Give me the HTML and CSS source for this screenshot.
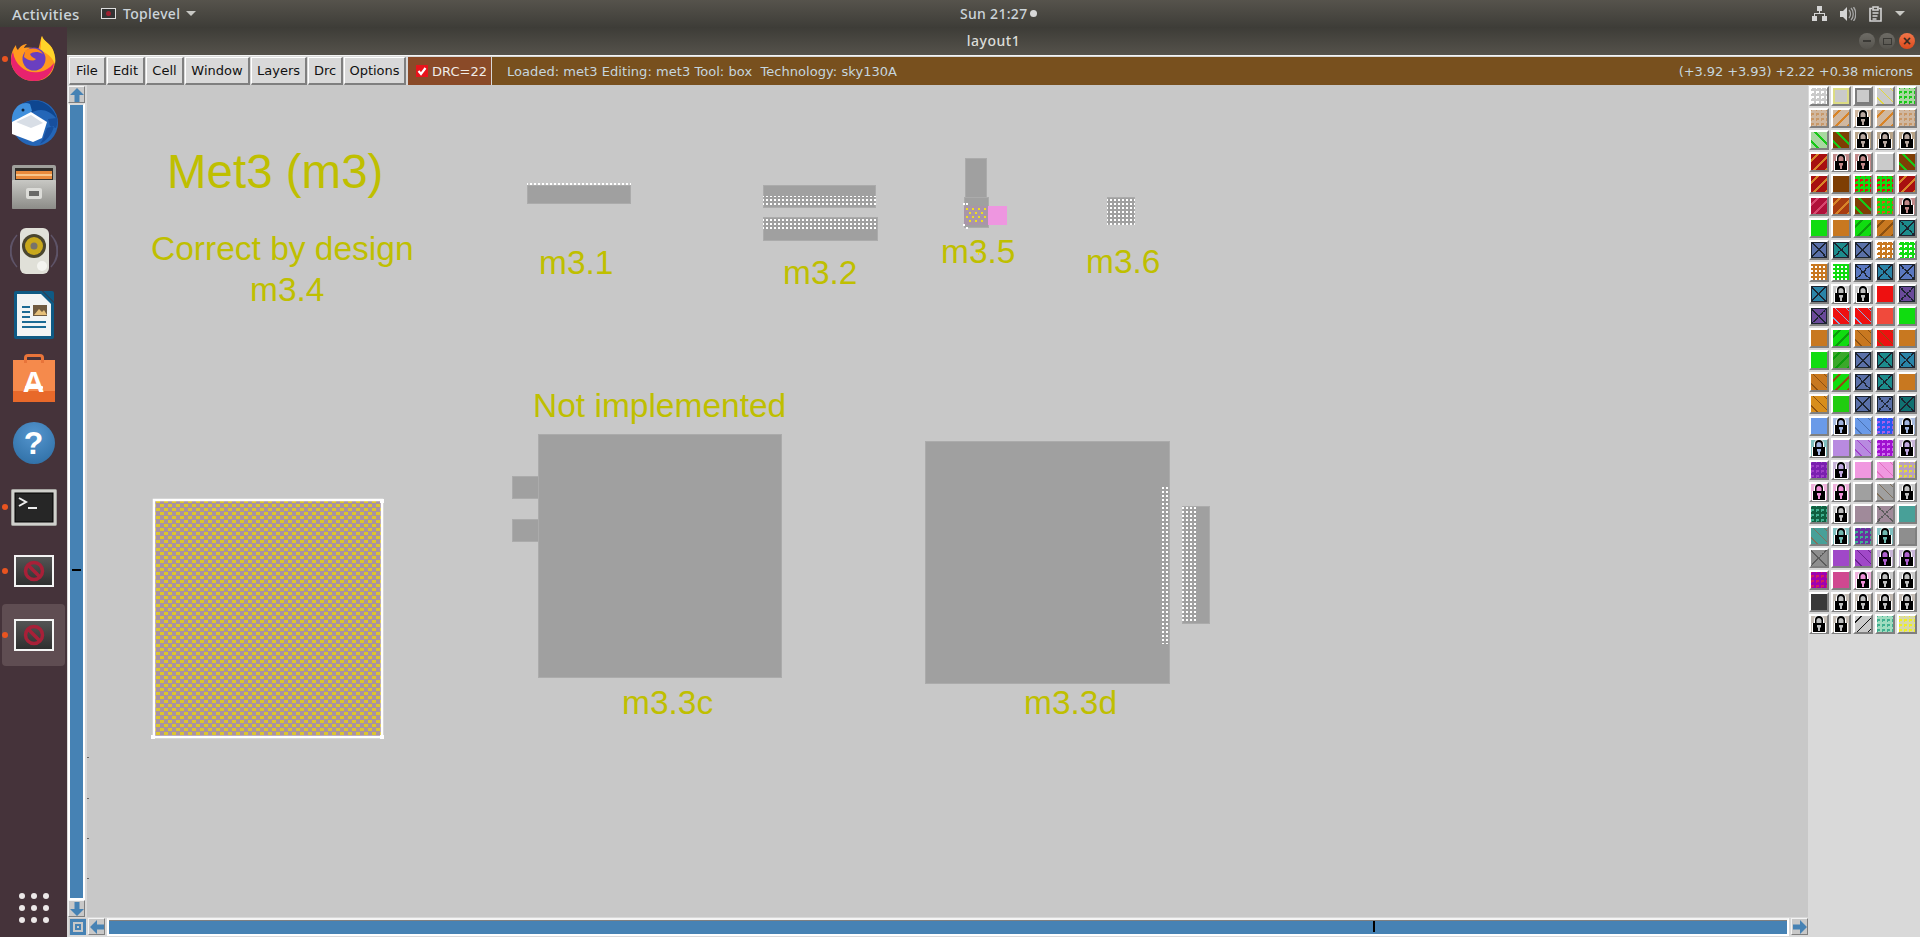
FILE: index.html
```html
<!DOCTYPE html>
<html lang="en">
<head>
  <meta charset="UTF-8">
  <title>layout1</title>
  <link rel="stylesheet" href="styles.css">
</head>
<body>
  <svg class="defs" width="0" height="0">
    <defs>
      <symbol id="lock" viewBox="0 0 14 18">
        <path d="M2 8V5a5 5 0 0 1 10 0v3h2v10H0V8z" fill="#fff"/>
        <path d="M3 8V5a4 4 0 0 1 8 0v3h2v9H1V8z" fill="#000"/>
        <path d="M4.500 8V5.500a2.500 2.500 0 0 1 5 0V8z" fill="currentColor"/>
        <path d="M5 10h4v2.500H8V16H6v-3.500H5z" fill="currentColor"/>
      </symbol>
      <linearGradient id="screen" x1="0" y1="0" x2="0" y2="1">
        <stop offset="0" stop-color="#555"/>
        <stop offset="1" stop-color="#2e2e2e"/>
      </linearGradient>
      <symbol id="nosign" viewBox="0 0 40 32">
        <rect x="1" y="1" width="38" height="30" fill="url(#screen)" stroke="#f4f4f4" stroke-width="2"/>
        <circle cx="20" cy="16" r="8.500" fill="none" stroke="#a82038" stroke-width="3.500"/>
        <path d="M14 10l12 12" stroke="#a82038" stroke-width="3.500"/>
      </symbol>
    </defs>
  </svg>

  <header class="panel">
    <div class="panel-left">
      <span class="activities">Activities</span>
      <svg class="app-mini" width="15" height="11" viewBox="0 0 15 11"><rect x=".5" y=".5" width="14" height="10" fill="#333" stroke="#ddd"/><circle cx="7.500" cy="5.500" r="2.500" fill="#a02030"/></svg>
      <span class="app-name">Toplevel</span>
      <span class="caret"></span>
    </div>
    <div class="clock">Sun 21:27<span class="clock-dot"></span></div>
    <div class="panel-right">
      <svg width="15" height="15" viewBox="0 0 15 15" fill="#d4d4d4"><rect x="5" y="0" width="5" height="5"/><rect x="0" y="10" width="5" height="5"/><rect x="10" y="10" width="5" height="5"/><path d="M7 5h1v2h5v3h-1V8H3v2H2V7h5z"/></svg>
      <svg width="16" height="14" viewBox="0 0 16 14" fill="#d4d4d4"><path d="M0 4h3l4-4v14l-4-4H0z"/><path d="M9 3c2 2 2 6 0 8M11 1c3 3 3 9 0 12M13.500 0c3 4 3 10 0 14" fill="none" stroke="#a8a8a8" stroke-width="1.300"/></svg>
      <svg width="15" height="16" viewBox="0 0 15 16" fill="none" stroke="#d4d4d4" stroke-width="1.600"><path d="M10 2.500h2V15H1V2.500h2"/><path d="M4 1h5v3H4zM3.500 7h6M3.500 10h5M3.500 13h4"/></svg>
      <span class="caret caret-tray"></span>
    </div>
  </header>

  <div class="desktop">
    <nav class="dock">
      <div class="dock-item running">
        <svg width="46" height="46" viewBox="0 0 46 46">
          <path d="M31 0c1 5 8 7 11 14 5 12 1 31-19 31C9 45 0 34 0 24 0 17 2 13 5 9c0 3 1 4 2 5 2-4 6-6 9-6-2 2-3 3-3 4 5-1 11 0 14 2 2-5 2-10 4-14z" fill="#ff9a1f"/>
          <path d="M23 45C9 45 0 34 0 24c0-3 1-6 2-8 2 14 14 22 26 20 6-1 11-4 15-9-1 10-9 18-20 18z" fill="#e8226e"/>
          <path d="M31 0c1 5 8 7 11 14 2 5 3 10 2 14-3-7-8-11-15-14 2-5 0-10 2-14z" fill="#ffd42a"/>
          <circle cx="23" cy="23" r="11.500" fill="#6a3fc0"/>
          <path d="M14 15c6-4 14-3 18 3-6-3-10-2-13 0 1 3 4 4 6 5-3 3-9 1-12-2z" fill="#ff8c1a"/>
        </svg>
      </div>
      <div class="dock-item">
        <svg width="48" height="48" viewBox="0 0 48 48">
          <circle cx="25" cy="24" r="23" fill="#2466b8"/>
          <path d="M8 8c6-6 16-8 24-5 7 3 13 9 15 17-5-6-11-9-16-9-4 0-8 1-11 4z" fill="#0e4690"/>
          <path d="M2 24C1 16 4 10 9 6c3-2 8-3 11-1l2 7-9 8z" fill="#3f8fdc"/>
          <circle cx="13" cy="11" r="1.500" fill="#10243c"/>
          <path d="M2 23l19-10 16 10-5 16-9 4-21-8z" fill="#fff"/>
          <path d="M6 23l15-7 12 8-12 5z" fill="#d8dee6"/>
          <path d="M30 45c6-3 12-9 14-18l-7 2-4 11zM38 20l9-1c1 4 0 7-1 10l-6-2z" fill="#174f9e"/>
        </svg>
      </div>
      <div class="dock-item">
        <svg width="44" height="44" viewBox="0 0 44 44">
          <defs>
            <linearGradient id="drawer" x1="0" y1="0" x2="0" y2="1">
              <stop offset="0" stop-color="#c8c8c4"/>
              <stop offset="1" stop-color="#8c8c88"/>
            </linearGradient>
          </defs>
          <rect x="0" y="0" width="44" height="44" rx="2" fill="#a0a09c"/>
          <rect x="3" y="3" width="38" height="13" fill="#33302c"/>
          <rect x="4" y="6" width="36" height="8" fill="#e88a3c"/>
          <rect x="4" y="9" width="36" height="2" fill="#f6c58c"/>
          <rect x="0" y="15" width="44" height="29" rx="1" fill="url(#drawer)"/>
          <rect x="14" y="23" width="16" height="11" rx="2" fill="#dcdcd8"/>
          <rect x="17" y="26" width="10" height="5" fill="#6a6a68"/>
        </svg>
      </div>
      <div class="dock-item">
        <svg width="48" height="46" viewBox="0 0 48 46">
          <path d="M7 7c-8 9-8 23 0 32M41 7c8 9 8 23 0 32M4 11c-5 7-5 17 0 24M44 11c5 7 5 17 0 24" fill="none" stroke="#5e5468" stroke-width="1.500"/>
          <rect x="10" y="0" width="29" height="46" rx="6" fill="#e0e0d8"/>
          <circle cx="24" cy="18" r="12" fill="#4a4630"/>
          <circle cx="24" cy="18" r="9" fill="#c8a81c"/>
          <circle cx="24" cy="18" r="3.500" fill="#77736a"/>
          <circle cx="32" cy="38" r="5" fill="#f4f4f0"/>
        </svg>
      </div>
      <div class="dock-item">
        <svg width="40" height="48" viewBox="0 0 40 48">
          <path d="M0 2a2 2 0 0 1 2-2h26l12 12v34a2 2 0 0 1-2 2H2a2 2 0 0 1-2-2z" fill="#0f5a84"/>
          <path d="M3 3h24l10 10v32H3z" fill="#f2f4f4"/>
          <path d="M29 0h9a2 2 0 0 1 2 2v9z" fill="#0f5a84"/>
          <path d="M8 15h8v2H8zM8 20h8v2H8zM8 25h8v2H8zM8 30h24v2H8zM8 35h24v2H8z" fill="#1b6a94"/>
          <rect x="19" y="14" width="14" height="11" fill="#6f5a40"/>
          <path d="M20 24l5-6 3 3 2-2 3 5z" fill="#e6c07a"/>
        </svg>
      </div>
      <div class="dock-item">
        <div class="store"><span class="store-handle"></span><span class="store-a">A</span><span class="store-bar"></span></div>
      </div>
      <div class="dock-item">
        <div class="help">?</div>
      </div>
      <div class="dock-item running">
        <svg width="46" height="37" viewBox="0 0 46 37">
          <rect x=".5" y=".5" width="45" height="36" rx="1" fill="#d0d0cc" stroke="#a4a4a0"/>
          <rect x="4" y="4" width="38" height="29" fill="#262626" stroke="#000"/>
          <path d="M8 9l7 4-7 4" fill="none" stroke="#eee" stroke-width="2"/>
          <rect x="17" y="18" width="9" height="2" fill="#eee"/>
        </svg>
      </div>
      <div class="dock-item running">
        <svg class="nosign"><use href="#nosign"/></svg>
      </div>
      <div class="dock-item running active">
        <svg class="nosign"><use href="#nosign"/></svg>
      </div>
      <div class="show-apps">
        <i></i><i></i><i></i><i></i><i></i><i></i><i></i><i></i><i></i>
      </div>
    </nav>

    <div class="window">
      <div class="titlebar">
        <span class="title">layout1</span>
        <div class="win-buttons">
          <span class="win-btn"><b class="min"></b></span>
          <span class="win-btn"><b class="max"></b></span>
          <span class="win-btn close">&#215;</span>
        </div>
      </div>

      <div class="menubar">
        <button class="menu-btn w-file">File</button>
        <button class="menu-btn w-edit">Edit</button>
        <button class="menu-btn w-cell">Cell</button>
        <button class="menu-btn w-window">Window</button>
        <button class="menu-btn w-layers">Layers</button>
        <button class="menu-btn w-drc">Drc</button>
        <button class="menu-btn w-options">Options</button>
        <div class="drc-check">
          <svg width="12" height="12" viewBox="0 0 12 12"><rect width="12" height="12" fill="#e8141c"/><path d="M2.500 6l2.500 3 4.500-6" fill="none" stroke="#fff" stroke-width="2.200"/></svg>
          <span>DRC=22</span>
        </div>
        <div class="status">
          <span class="status-info">Loaded: met3 Editing: met3 Tool: box&nbsp; Technology: sky130A</span>
          <span class="status-coords">(+3.92 +3.93) +2.22 +0.38 microns</span>
        </div>
      </div>

      <div class="workarea">
        <div class="vscroll">
          <span class="arrow-btn">
            <svg width="14" height="14" viewBox="0 0 14 14"><path d="M7 0l7 7H9.500v7h-5V7H0z" fill="#4682b4"/></svg>
          </span>
          <div class="vtrough"><span class="vtick"></span></div>
          <span class="arrow-btn">
            <svg width="14" height="14" viewBox="0 0 14 14"><path d="M7 14L0 7h4.500V0h5v7H14z" fill="#4682b4"/></svg>
          </span>
        </div>

        <div class="canvas">
          <svg class="layout" width="1721" height="832" viewBox="87 85 1721 832">
            <defs>
              <pattern id="white-dots" x="2" y="3" width="4" height="4" patternUnits="userSpaceOnUse">
                <rect width="2" height="2" fill="#fff"/>
              </pattern>
              <pattern id="via-dots" width="8" height="8" patternUnits="userSpaceOnUse">
                <rect width="8" height="8" fill="#a892a2"/>
                <rect x="0" y="0" width="4" height="3" fill="#dcc62c"/>
                <rect x="4" y="4" width="4" height="3" fill="#dcc62c"/>
              </pattern>
              <pattern id="yellow-dots" width="6" height="8" patternUnits="userSpaceOnUse">
                <rect width="2" height="2" fill="#eede20"/>
                <rect x="3" y="4" width="2" height="2" fill="#eede20"/>
              </pattern>
            </defs>

            <g class="metal">
              <rect x="527.500" y="185.500" width="103" height="18"/>
              <rect x="763.500" y="185.500" width="112" height="22"/>
              <rect x="763.500" y="217.500" width="114" height="23"/>
              <rect x="965.500" y="158.500" width="21" height="40"/>
              <rect x="964.500" y="197.500" width="24" height="30"/>
              <rect x="1107.500" y="197.500" width="27" height="27"/>
              <rect x="538.500" y="434.500" width="243" height="243"/>
              <rect x="512.500" y="476.500" width="26" height="22"/>
              <rect x="512.500" y="519.500" width="26" height="22"/>
              <rect x="925.500" y="441.500" width="244" height="242"/>
              <rect x="1182.500" y="506.500" width="27" height="117"/>
            </g>

            <rect x="527" y="183" width="104" height="2" fill="url(#white-dots)"/>
            <rect x="763" y="196" width="113" height="11" fill="url(#white-dots)"/>
            <rect x="763" y="218" width="115" height="11" fill="url(#white-dots)"/>
            <rect x="1107" y="197" width="28" height="28" fill="url(#white-dots)"/>
            <rect x="1162" y="487" width="7" height="157" fill="url(#white-dots)"/>
            <rect x="1182" y="506" width="14" height="117" fill="url(#white-dots)"/>

            <rect x="988" y="206" width="19" height="19" fill="#ee96e0"/>
            <rect x="964" y="206" width="24" height="19" fill="#a996a8"/>
            <rect x="965" y="208" width="22" height="16" fill="url(#yellow-dots)"/>
            <path d="M963 203h2v2h-2zM966 203h2v2h-2zM963 224h2v2h-2zM966 227h2v2h-2z" fill="#fff"/>
            <path d="M976 252h5v1h-5zM978 250h1v5h-1z" fill="#eede20"/>

            <rect x="155" y="501" width="226" height="236" fill="url(#via-dots)"/>
            <rect x="154" y="500" width="228" height="237" fill="none" stroke="#fff" stroke-width="2.500"/>
            <path d="M151 735h4v4h-4zM380 735h4v4h-4zM380 499h4v4h-4z" fill="#fff"/>

            <path d="M87 757h2v1h-2zM87 798h2v1h-2zM87 838h2v1h-2zM87 878h2v1h-2z" fill="#666"/>
          </svg>

          <span class="label big met3">Met3 (m3)</span>
          <span class="label correct">Correct by design</span>
          <span class="label m34">m3.4</span>
          <span class="label m31">m3.1</span>
          <span class="label m32">m3.2</span>
          <span class="label m35">m3.5</span>
          <span class="label m36">m3.6</span>
          <span class="label notimpl">Not implemented</span>
          <span class="label m33c">m3.3c</span>
          <span class="label m33d">m3.3d</span>
        </div>

        <div class="layers">
          <i class="tile c-grey i-white dots"></i>
          <i class="tile c-grey ring-yellow"></i>
          <i class="tile c-grey ring-dark"></i>
          <i class="tile c-grey i-yellow diag-b"></i>
          <i class="tile c-palegreen i-green dots"></i>

          <i class="tile c-tan i-tandot dots"></i>
          <i class="tile c-tan i-orange diag"></i>
          <i class="tile c-tan lk"><svg><use href="#lock"/></svg></i>
          <i class="tile c-tan i-orange diag"></i>
          <i class="tile c-tan i-tandot dots"></i>

          <i class="tile c-palegreen i-green diag-g"></i>
          <i class="tile c-brown i-green diag-g"></i>
          <i class="tile c-tan2 lk"><svg><use href="#lock"/></svg></i>
          <i class="tile c-tan2 lk"><svg><use href="#lock"/></svg></i>
          <i class="tile c-tan2 lk"><svg><use href="#lock"/></svg></i>

          <i class="tile c-darkred i-orange diag"></i>
          <i class="tile c-rose lk t-red"><svg><use href="#lock"/></svg></i>
          <i class="tile c-rose lk t-red"><svg><use href="#lock"/></svg></i>
          <i class="tile c-grey"></i>
          <i class="tile c-brown i-green diag-g"></i>

          <i class="tile c-darkred i-orange diag"></i>
          <i class="tile c-brown"></i>
          <i class="tile c-green i-red dots"></i>
          <i class="tile c-green i-red dots"></i>
          <i class="tile c-darkred i-orange diag"></i>

          <i class="tile c-crimson i-pinkred diag"></i>
          <i class="tile c-rust i-orange diag"></i>
          <i class="tile c-brown i-green diag-g"></i>
          <i class="tile c-green i-rust dots"></i>
          <i class="tile c-rose lk t-red"><svg><use href="#lock"/></svg></i>

          <i class="tile c-green"></i>
          <i class="tile c-orange"></i>
          <i class="tile c-green i-dkgreen diag"></i>
          <i class="tile c-orange i-dkbrown diag"></i>
          <i class="tile c-teal cross"></i>

          <i class="tile c-blue cross"></i>
          <i class="tile c-teal cross"></i>
          <i class="tile c-blue cross"></i>
          <i class="tile c-orange i-white dots"></i>
          <i class="tile c-green i-white dots"></i>

          <i class="tile c-orange i-white dots-fine"></i>
          <i class="tile c-green i-white dots-fine"></i>
          <i class="tile c-blue2 cross"></i>
          <i class="tile c-tealblue cross"></i>
          <i class="tile c-blue2 cross"></i>

          <i class="tile c-tealblue cross"></i>
          <i class="tile c-grey lk t-grey"><svg><use href="#lock"/></svg></i>
          <i class="tile c-grey lk t-grey"><svg><use href="#lock"/></svg></i>
          <i class="tile c-red"></i>
          <i class="tile c-purple cross"></i>

          <i class="tile c-purple cross"></i>
          <i class="tile c-red i-ltblue diag-b"></i>
          <i class="tile c-red i-ltblue diag-b"></i>
          <i class="tile c-coral"></i>
          <i class="tile c-green"></i>

          <i class="tile c-orange"></i>
          <i class="tile c-green i-dkgreen diag"></i>
          <i class="tile c-orange i-dkbrown diag-b"></i>
          <i class="tile c-red i-dkbrown diag-b"></i>
          <i class="tile c-orange"></i>

          <i class="tile c-green"></i>
          <i class="tile c-midgreen i-dkgreen diag"></i>
          <i class="tile c-blue cross"></i>
          <i class="tile c-teal cross"></i>
          <i class="tile c-tealblue cross"></i>

          <i class="tile c-orange i-dkbrown diag-b"></i>
          <i class="tile c-green i-dkbrown diag"></i>
          <i class="tile c-blue cross"></i>
          <i class="tile c-teal cross"></i>
          <i class="tile c-orange"></i>

          <i class="tile c-amber i-dkbrown diag-b"></i>
          <i class="tile c-green2"></i>
          <i class="tile c-blue cross"></i>
          <i class="tile c-blue cross"></i>
          <i class="tile c-dkteal cross"></i>

          <i class="tile c-sky"></i>
          <i class="tile c-palesky lk t-blue"><svg><use href="#lock"/></svg></i>
          <i class="tile c-sky i-dkblue diag-b"></i>
          <i class="tile c-vivid i-violet dots"></i>
          <i class="tile c-palesky lk t-blue"><svg><use href="#lock"/></svg></i>

          <i class="tile c-paleteal lk t-blue"><svg><use href="#lock"/></svg></i>
          <i class="tile c-lilac"></i>
          <i class="tile c-lilac i-violet2 diag-b"></i>
          <i class="tile c-magenta i-lilac dots"></i>
          <i class="tile c-palelilac lk t-purple"><svg><use href="#lock"/></svg></i>

          <i class="tile c-dkpurple i-violet2 dots"></i>
          <i class="tile c-palelilac lk t-purple"><svg><use href="#lock"/></svg></i>
          <i class="tile c-pink"></i>
          <i class="tile c-pink i-hotpink diag-b"></i>
          <i class="tile c-mauvegrey i-yellow dots"></i>

          <i class="tile c-palepink lk t-pink"><svg><use href="#lock"/></svg></i>
          <i class="tile c-palepink lk t-pink"><svg><use href="#lock"/></svg></i>
          <i class="tile c-midgrey"></i>
          <i class="tile c-midgrey i-brownish diag-b"></i>
          <i class="tile c-grey lk t-grey"><svg><use href="#lock"/></svg></i>

          <i class="tile c-forest i-seagreen dots"></i>
          <i class="tile c-grey lk t-grey"><svg><use href="#lock"/></svg></i>
          <i class="tile c-mauve"></i>
          <i class="tile c-mauve cross-soft"></i>
          <i class="tile c-seagreen"></i>

          <i class="tile c-seagreen i-brownish diag-b"></i>
          <i class="tile c-paleteal lk t-teal"><svg><use href="#lock"/></svg></i>
          <i class="tile c-indigo i-seagreen dots"></i>
          <i class="tile c-paleteal lk t-teal"><svg><use href="#lock"/></svg></i>
          <i class="tile c-grey2"></i>

          <i class="tile c-grey2 cross-soft"></i>
          <i class="tile c-violet"></i>
          <i class="tile c-violet i-dkpurple diag-b"></i>
          <i class="tile c-palelilac lk t-violet"><svg><use href="#lock"/></svg></i>
          <i class="tile c-palelilac lk t-violet"><svg><use href="#lock"/></svg></i>

          <i class="tile c-purplemag i-crimson dots"></i>
          <i class="tile c-cerise"></i>
          <i class="tile c-palepink lk t-pink"><svg><use href="#lock"/></svg></i>
          <i class="tile c-grey lk t-grey"><svg><use href="#lock"/></svg></i>
          <i class="tile c-grey lk t-grey"><svg><use href="#lock"/></svg></i>

          <i class="tile c-charcoal"></i>
          <i class="tile c-stone lk t-grey"><svg><use href="#lock"/></svg></i>
          <i class="tile c-stone lk t-grey"><svg><use href="#lock"/></svg></i>
          <i class="tile c-stone lk t-grey"><svg><use href="#lock"/></svg></i>
          <i class="tile c-stone lk t-grey"><svg><use href="#lock"/></svg></i>

          <i class="tile c-stone lk t-grey"><svg><use href="#lock"/></svg></i>
          <i class="tile c-stone lk t-grey"><svg><use href="#lock"/></svg></i>
          <i class="tile c-grey i-black diag-w"></i>
          <i class="tile c-mint i-seagreen dots"></i>
          <i class="tile c-paleyellow i-brightyellow dots"></i>
        </div>

        <div class="hscroll">
          <span class="arrow-btn zoom-box">
            <svg width="16" height="16" viewBox="0 0 16 16"><path fill-rule="evenodd" d="M0 0h16v16H0zM3 3v10h10V3zM5 5h6v6H5zM7 7v2h2V7z" fill="#4682b4"/></svg>
          </span>
          <span class="arrow-btn">
            <svg width="14" height="14" viewBox="0 0 14 14"><path d="M0 7l7-7v4.500h7v5H7V14z" fill="#4682b4"/></svg>
          </span>
          <div class="htrough"><span class="htick"></span></div>
          <span class="arrow-btn">
            <svg width="14" height="14" viewBox="0 0 14 14"><path d="M14 7l-7 7V9.500H0v-5h7V0z" fill="#4682b4"/></svg>
          </span>
        </div>
      </div>
    </div>
  </div>
</body>
</html>
```

FILE: styles.css
```css
html, body {
  margin: 0;
  padding: 0;
  height: 937px;
  overflow: hidden;
}
body {
  display: flex;
  flex-direction: column;
  font-family: "Noto Sans", "Open Sans", sans-serif;
  background: #45333a;
}
.defs {
  position: absolute;
}

/* top panel */
.panel {
  flex: 0 0 27px;
  position: relative;
  display: flex;
  justify-content: space-between;
  align-items: center;
  background: linear-gradient(#56534c, #3e3d38);
  color: #ccd4da;
  font-size: 14px;
  font-weight: 500;
  letter-spacing: .3px;
}
.panel-left {
  display: flex;
  align-items: center;
  padding-left: 12px;
}
.activities {
  width: 89px;
  font-size: 15px;
}
.app-mini {
  margin-right: 7px;
}
.app-name {
  margin-right: 6px;
}
.caret {
  width: 0;
  height: 0;
  border-left: 5px solid transparent;
  border-right: 5px solid transparent;
  border-top: 5px solid #c8c8c4;
}
.caret-tray {
  margin-left: -2px;
}
.clock {
  position: absolute;
  left: 960px;
  top: 4px;
  display: flex;
  align-items: center;
  gap: 3px;
}
.clock-dot {
  width: 7px;
  height: 7px;
  border-radius: 50%;
  background: #d8d8d8;
}
.panel-right {
  display: flex;
  align-items: center;
  gap: 13px;
  padding-right: 15px;
}

.desktop {
  flex: 1;
  display: flex;
  min-height: 0;
}

/* dock */
.dock {
  flex: 0 0 67px;
  display: flex;
  flex-direction: column;
  background: #45333a;
}
.dock-item {
  position: relative;
  height: 64px;
  display: flex;
  align-items: center;
  justify-content: center;
  flex-shrink: 0;
}
.dock-item.running::before {
  content: "";
  position: absolute;
  left: 2px;
  top: 29px;
  width: 6px;
  height: 6px;
  border-radius: 50%;
  background: #e95420;
}
.dock-item.active {
  margin: 1px 2px;
  height: 62px;
  border-radius: 4px;
  background: #5f4d52;
}
.dock-item.active::before {
  left: 0;
  top: 28px;
}
.nosign {
  width: 40px;
  height: 32px;
}
.store {
  position: relative;
  width: 42px;
  height: 42px;
  margin-top: 4px;
  background: linear-gradient(#f58a4c 74%, #e8692a 74%);
  color: #fff;
  text-align: center;
  overflow: visible;
}
.store-handle {
  position: absolute;
  left: 11px;
  top: -6px;
  width: 14px;
  height: 6px;
  border: 3px solid #e8743a;
  border-bottom: 0;
  border-radius: 4px 4px 0 0;
}
.store-a {
  font: bold 30px/44px "Liberation Sans", sans-serif;
}
.store-bar {
  position: absolute;
  left: 12px;
  top: 26px;
  width: 18px;
  height: 3px;
  background: #fff;
  border-radius: 1px;
}
.help {
  width: 42px;
  height: 42px;
  border-radius: 50%;
  background: radial-gradient(circle at 50% 30%, #5596cf, #2a6aa0);
  color: #fff;
  font: bold 32px/42px "Liberation Sans", sans-serif;
  text-align: center;
}
.show-apps {
  margin-top: auto;
  margin-bottom: 14px;
  align-self: center;
  display: grid;
  grid-template-columns: repeat(3, 6px);
  gap: 6px;
}
.show-apps i {
  width: 6px;
  height: 6px;
  border-radius: 50%;
  background: #ece8e8;
}

/* window */
.window {
  flex: 1;
  display: flex;
  flex-direction: column;
  min-width: 0;
  background: #d9d9d9;
}
.titlebar {
  flex: 0 0 28px;
  box-sizing: border-box;
  padding-bottom: 2px;
  position: relative;
  display: flex;
  justify-content: center;
  align-items: center;
  background: linear-gradient(#3d3c37, #55524b);
  color: #dcdcd8;
  font-size: 14px;
  font-weight: 500;
  letter-spacing: .5px;
}
.win-buttons {
  position: absolute;
  right: 5px;
  top: 6px;
  display: flex;
  gap: 4px;
}
.win-btn {
  width: 16px;
  height: 16px;
  border-radius: 50%;
  background: linear-gradient(#6e6c66, #55534d);
  display: flex;
  align-items: center;
  justify-content: center;
}
.win-btn .min {
  width: 8px;
  height: 2px;
  background: #3a3935;
}
.win-btn .max {
  width: 7px;
  height: 5px;
  border: 1px solid #3a3935;
}
.win-btn.close {
  background: linear-gradient(#f2764a, #db4a1c);
  color: #3a2a20;
  font: bold 14px/16px "Liberation Sans", sans-serif;
}

/* menu row */
.menubar {
  flex: 0 0 30px;
  box-sizing: border-box;
  display: flex;
  align-items: stretch;
  padding: 1px 0 0 2px;
  gap: 1px;
  background: #d9d9d9;
  border-top: 1px solid #f4f4f4;
  font-family: "DejaVu Sans", sans-serif;
  font-size: 13px;
}
.menu-btn {
  padding: 0;
  font: inherit;
  color: #111;
  background: #d9d9d9;
  border: 1px solid;
  border-color: #fff #7f7f7f #7f7f7f #fff;
  border-width: 1px 2px 2px 1px;
}
.w-file { width: 37px; }
.w-edit { width: 38px; }
.w-cell { width: 38px; }
.w-window { width: 65px; }
.w-layers { width: 56px; }
.w-drc { width: 35px; }
.w-options { width: 62px; }
.drc-check {
  width: 83px;
  margin-left: 1px;
  display: flex;
  align-items: center;
  justify-content: flex-end;
  gap: 4px;
  padding-right: 4px;
  box-sizing: border-box;
  background: #8a4a28;
  color: #f0ece8;
}
.status {
  flex: 1;
  display: flex;
  align-items: center;
  justify-content: space-between;
  padding: 0 7px 0 15px;
  background: #78501e;
  color: #c6d6de;
}
.status-info {
  letter-spacing: .05px;
}
.status-coords {
  letter-spacing: -.1px;
}

/* work area */
.workarea {
  flex: 1;
  min-height: 0;
  display: grid;
  grid-template-columns: 20px 1721px 1fr;
  grid-template-rows: 832px 1fr;
}
.arrow-btn {
  box-sizing: border-box;
  display: flex;
  align-items: center;
  justify-content: center;
  flex-shrink: 0;
  width: 17px;
  height: 17px;
  background: #c8c8c8;
  border: 1px solid;
  border-color: #f4f4f4 #7f7f7f #7f7f7f #f4f4f4;
}
.vscroll {
  display: flex;
  flex-direction: column;
  align-items: center;
  padding: 1px 1px 0 0;
  box-sizing: border-box;
  background: #d9d9d9;
}
.vtrough {
  flex: 1;
  box-sizing: border-box;
  width: 17px;
  position: relative;
  background: #4682b4;
  border: 2px solid #fff;
  border-top-color: #d9d9d9;
}
.vtick {
  position: absolute;
  left: 2px;
  top: 464px;
  width: 9px;
  height: 2px;
  background: #000;
}

.canvas {
  position: relative;
  background: #c8c8c8;
  overflow: hidden;
  font-family: "Liberation Sans", sans-serif;
  color: #bfbf00;
}
.layout {
  display: block;
}
.metal rect {
  fill: #a0a0a0;
  stroke: #ababab;
  stroke-width: 1;
}
.label {
  position: absolute;
  white-space: nowrap;
  font-size: 33.500px;
  line-height: 40px;
}
.label.big {
  font-size: 47.500px;
  line-height: 56px;
}
.met3 { left: 80px; top: 59px; }
.correct { left: 64px; top: 144px; }
.m34 { left: 163px; top: 185px; }
.m31 { left: 452px; top: 158px; }
.m32 { left: 696px; top: 168px; }
.m35 { left: 854px; top: 147px; }
.m36 { left: 999px; top: 157px; }
.notimpl { left: 446px; top: 301px; }
.m33c { left: 535px; top: 598px; }
.m33d { left: 937px; top: 598px; }

/* layer palette */
.layers {
  display: grid;
  grid-template-columns: repeat(5, 20px);
  grid-auto-rows: 20px;
  gap: 2px;
  align-content: start;
  padding: 1px 0 0 1px;
  background: #d9d9d9;
}
.tile {
  box-sizing: border-box;
  display: block;
  position: relative;
  border: 2px solid;
  border-color: #fff #7f7f7f #7f7f7f #fff;
  background-origin: border-box;
  --ink: #fff;
}
.lk svg {
  position: absolute;
  left: 1px;
  top: -1px;
  width: 14px;
  height: 18px;
  color: #b8a8a0;
}
.t-red svg { color: #c08888; }
.t-grey svg { color: #c0c0c0; }
.t-blue svg { color: #a0b4e0; }
.t-purple svg { color: #c0a8e0; }
.t-pink svg { color: #f090d8; }
.t-teal svg { color: #70b8b0; }
.t-violet svg { color: #b060d0; }

/* fill patterns */
.dots {
  background-image: conic-gradient(var(--ink) 25%, transparent 0);
  background-size: 5px 5px;
}
.dots-fine {
  background-image: conic-gradient(var(--ink) 25%, transparent 0);
  background-size: 4px 4px;
}
.diag {
  background-image: repeating-linear-gradient(135deg, transparent 0 7px, var(--ink) 7px 8.500px);
}
.diag-g {
  background-image: repeating-linear-gradient(45deg, transparent 0 7px, var(--ink) 7px 9px);
}
.diag-b {
  background-image: repeating-linear-gradient(45deg, transparent 0 7px, var(--ink) 7px 8px);
}
.diag-w {
  background-image: repeating-linear-gradient(135deg, transparent 0 7px, var(--ink) 7px 8px);
}
.cross {
  background-image:
    linear-gradient(45deg, transparent 47.500%, #1c2430 47.500% 52.500%, transparent 52.500%),
    linear-gradient(135deg, transparent 47.500%, #1c2430 47.500% 52.500%, transparent 52.500%);
  box-shadow: inset 0 0 0 1px #1c2430;
}
.cross-soft {
  background-image:
    linear-gradient(45deg, transparent 47.500%, #5c5c5c 47.500% 52.500%, transparent 52.500%),
    linear-gradient(135deg, transparent 47.500%, #5c5c5c 47.500% 52.500%, transparent 52.500%);
}
.ring-yellow {
  box-shadow: inset 0 0 0 2px #dcdc84;
}
.ring-dark {
  box-shadow: inset 0 0 0 2px #7c7c7c;
}

/* tile colours */
.c-grey { background-color: #cacaca; }
.c-grey2 { background-color: #8e8e8e; }
.c-midgrey { background-color: #a0a0a0; }
.c-stone { background-color: #c4bcb4; }
.c-charcoal { background-color: #383838; }
.c-palegreen { background-color: #a8d8a0; }
.c-tan { background-color: #d0b8a0; }
.c-tan2 { background-color: #b8a488; }
.c-brown { background-color: #7e3e04; }
.c-darkred { background-color: #a81010; }
.c-rose { background-color: #c08888; }
.c-crimson { background-color: #b0103a; }
.c-rust { background-color: #a83c10; }
.c-green { background-color: #10dc10; }
.c-green2 { background-color: #20cc10; }
.c-midgreen { background-color: #3aa82a; }
.c-orange { background-color: #c87820; }
.c-amber { background-color: #d88e1c; }
.c-teal { background-color: #1c8c8c; }
.c-dkteal { background-color: #107070; }
.c-blue { background-color: #5a70a8; }
.c-blue2 { background-color: #5a78c0; }
.c-tealblue { background-color: #2a84a8; }
.c-purple { background-color: #6a4a9a; }
.c-red { background-color: #ee1010; }
.c-coral { background-color: #f04a3c; }
.c-sky { background-color: #6a9ae8; }
.c-palesky { background-color: #a8bce0; }
.c-paleteal { background-color: #80c0c0; }
.c-vivid { background-color: #2858f0; }
.c-lilac { background-color: #b88ae0; }
.c-palelilac { background-color: #c8b4d8; }
.c-magenta { background-color: #a010d0; }
.c-dkpurple { background-color: #7a20b0; }
.c-pink { background-color: #f098e0; }
.c-palepink { background-color: #eeb0dc; }
.c-mauvegrey { background-color: #b8a0c0; }
.c-forest { background-color: #106040; }
.c-mauve { background-color: #a08a9a; }
.c-seagreen { background-color: #48a098; }
.c-indigo { background-color: #6a30a0; }
.c-violet { background-color: #a048c8; }
.c-purplemag { background-color: #a000b0; }
.c-cerise { background-color: #d04890; }
.c-mint { background-color: #a0dcc0; }
.c-paleyellow { background-color: #d8d8a8; }

/* tile ink */
.i-white { --ink: #fff; }
.i-black { --ink: #111; }
.i-yellow { --ink: #e0d840; }
.i-brightyellow { --ink: #f0f020; }
.i-green { --ink: #18c818; }
.i-dkgreen { --ink: #0c9c0c; }
.i-tandot { --ink: #c89868; }
.i-orange { --ink: #d88428; }
.i-red { --ink: #e01010; }
.i-rust { --ink: #d06018; }
.i-pinkred { --ink: #d84870; }
.i-dkbrown { --ink: #8c5010; }
.i-ltblue { --ink: #8cb0e0; }
.i-dkblue { --ink: #4a70b0; }
.i-violet { --ink: #a860e8; }
.i-violet2 { --ink: #a040c8; }
.i-lilac { --ink: #d070f0; }
.i-hotpink { --ink: #e070c0; }
.i-brownish { --ink: #80705c; }
.i-seagreen { --ink: #40b090; }
.i-dkpurple { --ink: #6a2090; }
.i-crimson { --ink: #d02060; }

/* bottom scrollbar */
.hscroll {
  grid-column: 1 / 3;
  display: flex;
  align-items: flex-start;
  gap: 2px;
  padding: 1px 0 0 2px;
  background: #d9d9d9;
}
.zoom-box {
  padding: 0;
  border: 0;
}
.htrough {
  flex: 1;
  box-sizing: border-box;
  height: 18px;
  position: relative;
  background: #4682b4;
  border: 2px solid #fff;
  border-top-color: #f4f4f4;
  box-shadow: inset 0 1px 0 #808080;
}
.htick {
  position: absolute;
  left: 1264px;
  top: 1px;
  width: 2px;
  height: 11px;
  background: #000;
}
```
